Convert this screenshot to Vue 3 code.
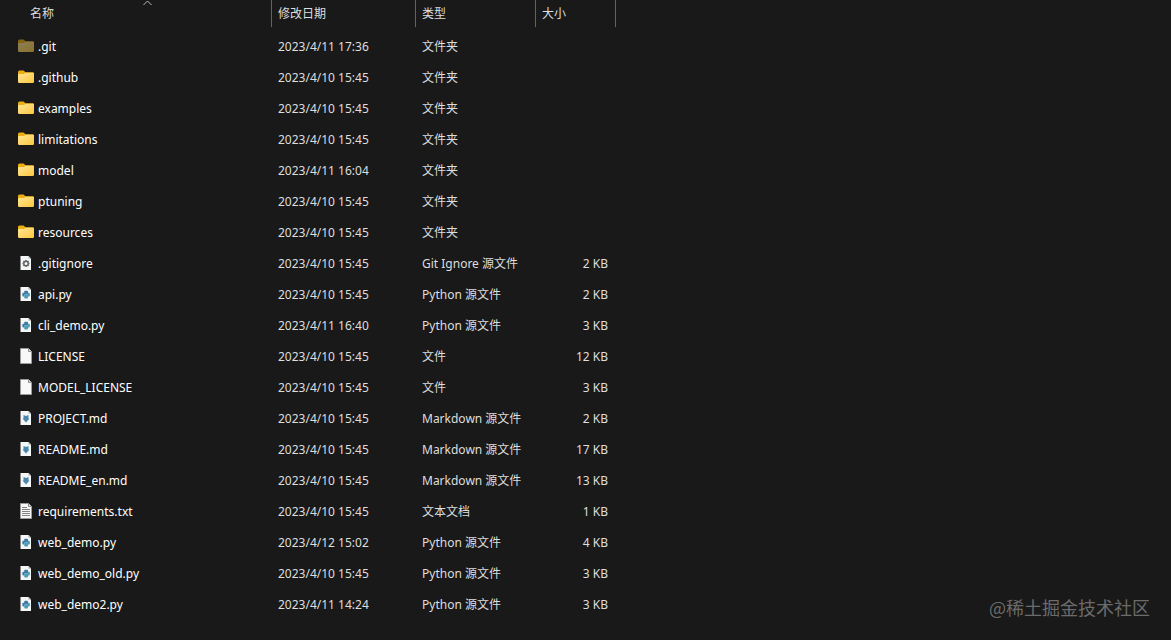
<script setup>
const files = [
  ['.git', '2023/4/11 17:36', '文件夹', '', 'hidden'],
  ['.github', '2023/4/10 15:45', '文件夹', '', 'folder'],
  ['examples', '2023/4/10 15:45', '文件夹', '', 'folder'],
  ['limitations', '2023/4/10 15:45', '文件夹', '', 'folder'],
  ['model', '2023/4/11 16:04', '文件夹', '', 'folder'],
  ['ptuning', '2023/4/10 15:45', '文件夹', '', 'folder'],
  ['resources', '2023/4/10 15:45', '文件夹', '', 'folder'],
  ['.gitignore', '2023/4/10 15:45', 'Git Ignore 源文件', '2 KB', 'gear'],
  ['api.py', '2023/4/10 15:45', 'Python 源文件', '2 KB', 'python'],
  ['cli_demo.py', '2023/4/11 16:40', 'Python 源文件', '3 KB', 'python'],
  ['LICENSE', '2023/4/10 15:45', '文件', '12 KB', 'blank'],
  ['MODEL_LICENSE', '2023/4/10 15:45', '文件', '3 KB', 'blank'],
  ['PROJECT.md', '2023/4/10 15:45', 'Markdown 源文件', '2 KB', 'markdown'],
  ['README.md', '2023/4/10 15:45', 'Markdown 源文件', '17 KB', 'markdown'],
  ['README_en.md', '2023/4/10 15:45', 'Markdown 源文件', '13 KB', 'markdown'],
  ['requirements.txt', '2023/4/10 15:45', '文本文档', '1 KB', 'text'],
  ['web_demo.py', '2023/4/12 15:02', 'Python 源文件', '4 KB', 'python'],
  ['web_demo_old.py', '2023/4/10 15:45', 'Python 源文件', '3 KB', 'python'],
  ['web_demo2.py', '2023/4/11 14:24', 'Python 源文件', '3 KB', 'python'],
].map(([name, date, type, size, icon]) => ({ name, date, type, size, icon }))

const isFolder = (icon) => icon === 'folder' || icon === 'hidden'
</script>

<template>
  <main class="explorer">
    <svg class="defs" width="0" height="0" aria-hidden="true">
      <defs>
        <linearGradient id="folder-front" x1="0" y1="0" x2="1" y2="1">
          <stop offset="0" stop-color="#ffe695" />
          <stop offset="1" stop-color="#fcc740" />
        </linearGradient>
      </defs>
    </svg>
    <table class="files">
      <colgroup>
        <col class="c-name" />
        <col class="c-date" />
        <col class="c-type" />
        <col class="c-size" />
        <col />
      </colgroup>
      <thead>
        <tr>
          <th aria-sort="ascending">
            <button class="head first" type="button">
              名称
              <svg class="caret" width="9" height="6" viewBox="0 0 9 6" aria-hidden="true">
                <path d="M0.5 5 4.5 1 8.5 5" fill="none" stroke="#b8b8b8" />
              </svg>
            </button>
          </th>
          <th><button class="head" type="button">修改日期</button></th>
          <th><button class="head" type="button">类型</button></th>
          <th><button class="head" type="button">大小</button></th>
          <th></th>
        </tr>
      </thead>
      <tbody>
        <tr v-for="file in files" :key="file.name">
          <td class="name">
            <div class="entry">
              <svg
                v-if="isFolder(file.icon)"
                class="icon"
                :class="{ dim: file.icon === 'hidden' }"
                width="16"
                height="16"
                viewBox="0 0 16 16"
                aria-hidden="true"
              >
                <path d="M0 3Q0 1.500 1.500 1.500H5.500L7.500 3.200H14.500Q16 3.200 16 4.500V8H0Z" fill="#edae13" />
                <path
                  d="M0 6Q0 5 1 5H6L7.500 3.800H15Q16 3.800 16 4.800V12.800Q16 14 14.800 14H1.200Q0 14 0 12.800Z"
                  fill="url(#folder-front)"
                />
              </svg>
              <svg v-else class="icon" width="16" height="16" viewBox="0 0 16 16" aria-hidden="true">
                <template v-if="file.icon === 'blank' || file.icon === 'text'">
                  <path d="M2.500 0.500H10.500L13.500 3.500V15.500H2.500Z" fill="#f8f8f8" stroke="#9b9b9b" />
                  <path d="M10.500 0.500V3.500H13.500" fill="#ddd" stroke="#8d8d8d" />
                  <path v-if="file.icon === 'text'" d="M4 4.500H9M4 6.500H12M4 8.500H12M4 10.500H12M4 12.500H12" stroke="#858585" />
                </template>
                <template v-else>
                  <path d="M2.500 1H10.500L13 3.500V15H2.500Z" fill="#f5f6f6" />
                  <path d="M10.500 1V3.500H13Z" fill="#a9adb0" />
                  <g v-if="file.icon === 'gear'" stroke="#5d6266" fill="none">
                    <circle cx="8" cy="8.500" r="2.200" stroke-width="1.400" />
                    <path d="M8 5V6M8 11V12M4.500 8.500H5.500M10.500 8.500H11.500M5.500 6 6.200 6.700M10.500 6 9.800 6.700M5.500 11 6.200 10.300M10.500 11 9.800 10.300" stroke-width="1.300" />
                  </g>
                  <g v-else-if="file.icon === 'python'">
                    <path d="M6.200 5.800Q6.200 4.800 7.200 4.800H8.900Q10 4.800 10 5.800V7.600Q10 8.600 9 8.600H7.200Q6.200 8.600 6.200 9.600V10.600H5.400Q4.300 10.600 4.300 9.200V8.100Q4.300 6.800 5.400 6.800H6.200Z" fill="#3c7ba5" />
                    <path d="M10 11.500Q10 12.500 9 12.500H7.300Q6.200 12.500 6.200 11.500V9.600Q6.200 8.600 7.200 8.600H9Q10 8.600 10 7.600V6.800H10.800Q11.900 6.800 11.900 8.200V9.200Q11.900 10.600 10.800 10.600H10Z" fill="#4b9cb6" />
                  </g>
                  <path v-else d="M5.500 5 8 6 10.500 5V8.500H11.500L8 12.500 4.500 8.500H5.500Z" fill="#4a86ad" />
                </template>
              </svg>
              <span>{{ file.name }}</span>
            </div>
          </td>
          <td>{{ file.date }}</td>
          <td>{{ file.type }}</td>
          <td class="size">{{ file.size }}</td>
          <td></td>
        </tr>
      </tbody>
    </table>
    <p class="watermark">@稀土掘金技术社区</p>
  </main>
</template>

<style>
body {
  background: #191919;
}
</style>

<style scoped>
.explorer {
  position: relative;
  box-sizing: border-box;
  min-height: 100vh;
  background: #191919;
  color: #dedede;
  font-family: "Noto Sans", "Noto Sans CJK SC", sans-serif;
  font-size: 12px;
  line-height: 16px;
}
.defs {
  position: absolute;
}
.files {
  width: 100%;
  table-layout: fixed;
  border-collapse: collapse;
}
.c-name {
  width: 272px;
}
.c-date {
  width: 144px;
}
.c-type {
  width: 120px;
}
.c-size {
  width: 80px;
}
th {
  padding: 0 0 4px;
  font-weight: 400;
}
.head {
  position: relative;
  display: block;
  width: 100%;
  height: 27px;
  padding: 1px 6px 0;
  border: 0;
  border-right: 1px solid #636363;
  background: none;
  color: inherit;
  font: inherit;
  text-align: left;
}
.head.first {
  padding-left: 30px;
}
.caret {
  position: absolute;
  top: 0;
  left: 143px;
}
td {
  height: 31px;
  padding: 0 6px;
  white-space: nowrap;
}
td.name {
  padding: 0 0 0 18px;
  color: #fff;
}
.entry {
  display: flex;
  align-items: center;
  gap: 4px;
}
.icon {
  flex: none;
  margin-bottom: 2px;
}
.dim {
  opacity: 0.5;
}
td.size {
  padding-right: 8px;
  text-align: right;
}
.watermark {
  position: absolute;
  right: 21px;
  bottom: 21px;
  margin: 0;
  color: #6b6b6b;
  font-family: "Noto Sans CJK SC", sans-serif;
  font-size: 18px;
  line-height: 24px;
}
</style>
